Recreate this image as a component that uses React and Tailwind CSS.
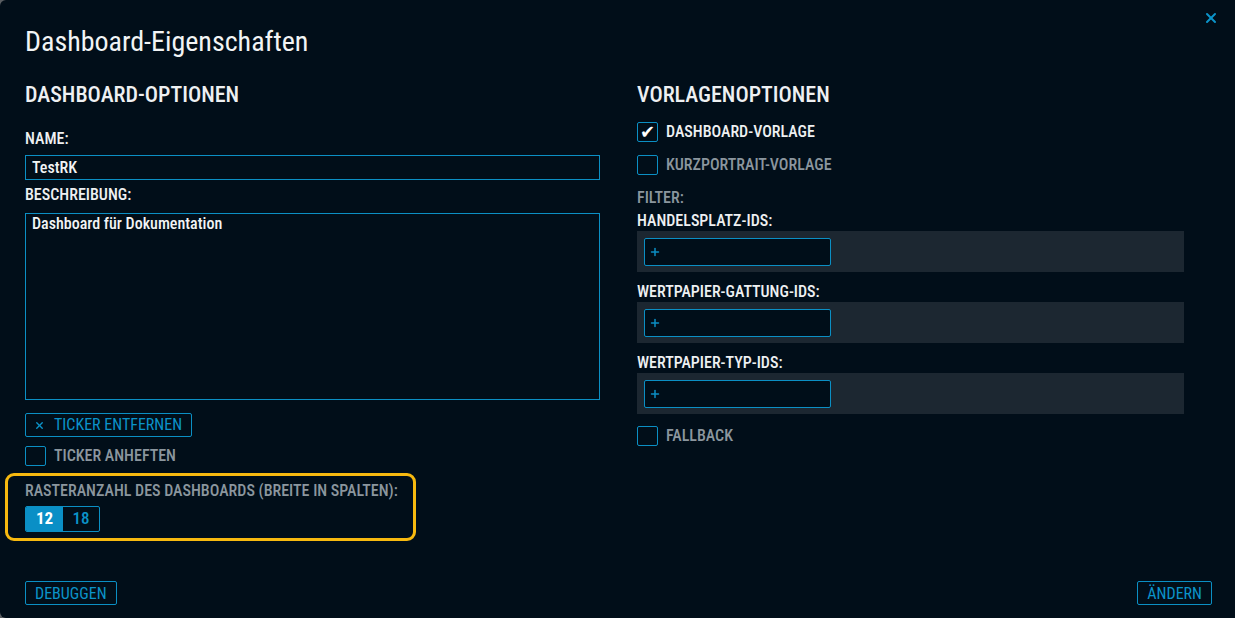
import { X, Plus } from "lucide-react";

const font = { fontFamily: '"Roboto Condensed", "Liberation Sans Narrow", Roboto, sans-serif' };

const Checkbox = ({ checked, label, dim }) => (
  <div className="flex items-center h-5">
    <div className="w-[21px] h-[20px] border border-[#0b8fc4] rounded-[2px] flex items-center justify-center">
      {checked && (
        <span className="text-white text-[18px] leading-none" style={{ fontFamily: '"DejaVu Sans", sans-serif' }}>
          ✔
        </span>
      )}
    </div>
    <span
      className={`ml-[8px] text-[16px] font-medium leading-[20px] ${dim ? "text-[#8b969e]" : "text-[#eef0f2]"}`}
    >
      {label}
    </span>
  </div>
);

const IdField = ({ label }) => (
  <div>
    <div className="text-[16px] font-medium text-[#eef0f2] h-[20px] leading-[20px]">{label}</div>
    <div className="bg-[#1c2731] h-[41px] flex items-center px-[7px]">
      <div className="w-[187px] h-[28px] border border-[#0b8fc4] rounded-[2px] bg-[#000e19] flex items-center pl-[4px]">
        <Plus size={12} strokeWidth={3} className="text-[#0b8fc4]" />
      </div>
    </div>
  </div>
);

export default function App() {
  return (
    <div className="w-[1235px] h-[618px] bg-[#5a5e62]" style={font}>
      <div className="relative w-full h-full bg-[#010e19] rounded-l-[6px] flex flex-col px-[25px]">
        <button className="absolute right-[16px] top-[10px] text-[#0b93c9]">
          <X size={16} strokeWidth={3} />
        </button>

        <h1 className="text-[28px] text-[#f2f4f5] mt-[26px] leading-[32px]">Dashboard-Eigenschaften</h1>

        <div className="flex gap-[37px] mt-[24px]">
          {/* Left */}
          <div className="w-[575px] flex flex-col">
            <h2 className="text-[22px] font-medium text-[#eef0f2] leading-[26px]">DASHBOARD-OPTIONEN</h2>
            <div className="mt-[21px] text-[16px] font-medium text-[#eef0f2] leading-[20px]">NAME:</div>
            <div className="mt-[6px] h-[25px] border border-[#0b8fc4] flex items-center px-[6px] text-[16px] font-medium text-[#f2f4f5]">
              TestRK
            </div>
            <div className="mt-[5px] text-[16px] font-medium text-[#eef0f2] leading-[20px]">BESCHREIBUNG:</div>
            <div className="mt-[8px] h-[187px] border border-[#0b8fc4] px-[6px] text-[16px] leading-[20px] font-medium text-[#f2f4f5]">
              Dashboard für Dokumentation
            </div>
            <button className="mt-[13px] self-start h-[24px] w-[167px] border border-[#0b8fc4] rounded-[2px] flex items-center pl-[8px] text-[16px] text-[#0b93c9]">
              <X size={11} strokeWidth={3} />
              <span className="ml-[9px]">TICKER ENTFERNEN</span>
            </button>
            <div className="mt-[9px]">
              <Checkbox label="TICKER ANHEFTEN" dim />
            </div>
            <div className="-mx-[20px] mt-[7px] w-[411px] h-[68px] border-[3px] border-[#f7b90f] rounded-[9px] pl-[17px] pt-[5px]">
              <div className="whitespace-nowrap text-[16px] font-medium text-[#8b969e] leading-[20px]">
                RASTERANZAHL DES DASHBOARDS (BREITE IN SPALTEN):
              </div>
              <div className="mt-[5px] flex h-[26px] w-[75px] border border-[#0b8fc4] rounded-[2px] overflow-hidden text-[17px]">
                <div className="w-[37px] bg-[#0a8fc6] text-white font-bold flex items-center justify-center">12</div>
                <div className="flex-1 text-[#0b93c9] font-medium flex items-center justify-center">18</div>
              </div>
            </div>
          </div>

          {/* Right */}
          <div className="w-[547px] flex flex-col">
            <h2 className="text-[22px] font-medium text-[#eef0f2] leading-[26px]">VORLAGENOPTIONEN</h2>
            <div className="mt-[14px]">
              <Checkbox checked label="DASHBOARD-VORLAGE" />
            </div>
            <div className="mt-[13px]">
              <Checkbox label="KURZPORTRAIT-VORLAGE" dim />
            </div>
            <div className="mt-[13px] text-[16px] font-medium text-[#8b969e] leading-[20px]">FILTER:</div>
            <div className="mt-[3px] flex flex-col gap-[10px]">
              <IdField label="HANDELSPLATZ-IDS:" />
              <IdField label="WERTPAPIER-GATTUNG-IDS:" />
              <IdField label="WERTPAPIER-TYP-IDS:" />
            </div>
            <div className="mt-[12px]">
              <Checkbox label="FALLBACK" dim />
            </div>
          </div>
        </div>

        <div className="mt-auto mb-[13px] flex justify-between">
          <button className="h-[24px] px-[9px] border border-[#0b8fc4] rounded-[2px] text-[16px] text-[#0b93c9]">
            DEBUGGEN
          </button>
          <button className="mr-[-2px] h-[24px] px-[9px] border border-[#0b8fc4] rounded-[2px] text-[16px] text-[#0b93c9]">
            ÄNDERN
          </button>
        </div>
      </div>
    </div>
  );
}
